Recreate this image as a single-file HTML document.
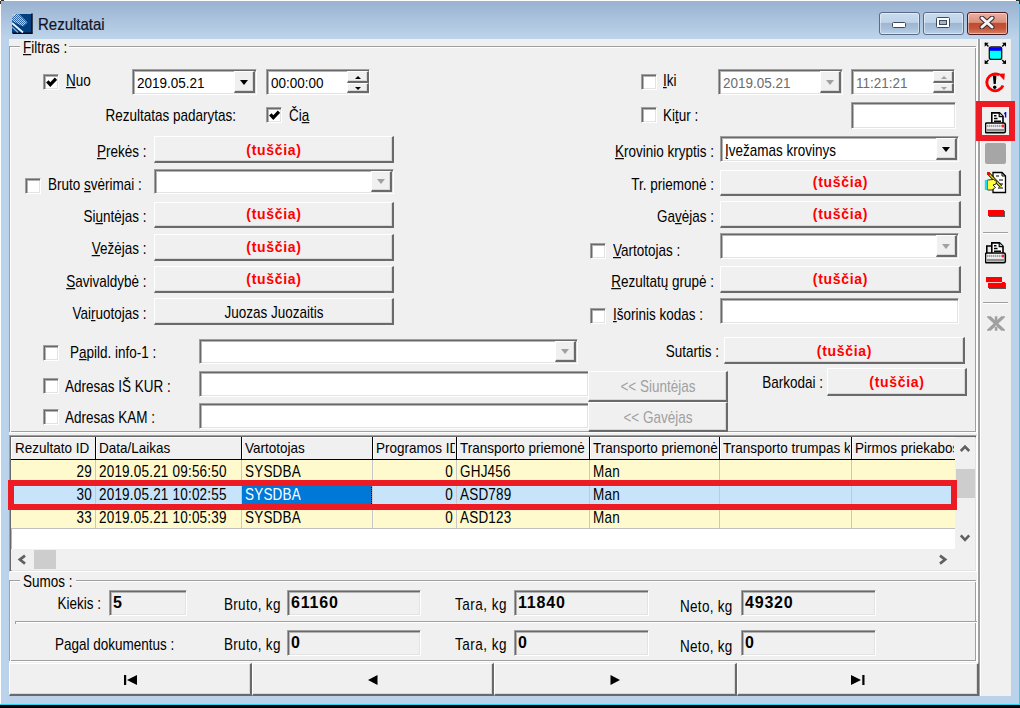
<!DOCTYPE html><html><head><meta charset="utf-8"><style>html,body{margin:0;padding:0;background:#fff;width:1020px;height:708px;overflow:hidden;}div,svg{position:absolute;box-sizing:border-box;}body{font-family:"Liberation Sans", sans-serif;}div{font-family:"Liberation Sans", sans-serif;}u{text-decoration:underline;text-underline-offset:1px;}</style></head><body>
<div style="left:1px;top:1px;width:1019px;height:704px;background:#bad2ea;"></div>
<div style="left:1px;top:1px;width:1018px;height:38px;background:linear-gradient(#99b2d0,#bdd4eb);"></div>
<div style="left:1019px;top:1px;width:1px;height:704px;background:#2ad4f2;"></div>
<div style="left:0px;top:704px;width:1020px;height:1px;background:#2ad4f2;"></div>
<div style="left:0px;top:705px;width:1020px;height:3px;background:#000;"></div>
<div style="left:9px;top:39px;width:1002px;height:657px;background:#f0f0f0;"></div>
<div style="left:1px;top:0px;width:3px;height:1px;background:#303030;"></div>
<div style="left:0px;top:1px;width:1px;height:3px;background:#303030;"></div>
<div style="left:1px;top:1px;width:2px;height:2px;background:#a8b8c8;"></div>
<div style="left:1016px;top:0px;width:4px;height:1px;background:#203030;"></div>
<div style="left:1019px;top:1px;width:1px;height:3px;background:#103038;"></div>
<div style="left:1017px;top:1px;width:2px;height:2px;background:#b0d0e0;"></div>
<svg style="left:12px;top:13px" width="22" height="22" viewBox="0 0 22 22"><defs><pattern id="chk" width="2" height="2" patternUnits="userSpaceOnUse"><rect width="2" height="2" fill="#3a6aa8"/><rect width="1" height="1" fill="#e8f0fa"/><rect x="1" y="1" width="1" height="1" fill="#c8d8ee"/></pattern></defs><rect x="0" y="1" width="20" height="19" fill="#003f80"/><rect x="19.2" y="0.5" width="1.5" height="20" fill="#050a18"/><rect x="0.5" y="19.5" width="20" height="1.5" fill="#050a18"/><path d="M0 1 L7 1 L15.5 9.5 L11 13.5 L0 8 Z" fill="url(#chk)" opacity="0.85"/><path d="M0 1 L4 1 L0 4 Z" fill="#b8cce4"/><path d="M0 10 L11 19.5" stroke="#f0f6ff" stroke-width="1.8"/><path d="M0 14 L6 19.5" stroke="#8fb0d8" stroke-width="1.2"/></svg>
<div style="left:38px;top:15px;font-size:15px;line-height:20px;height:20px;white-space:pre;color:#141428;transform:scaleY(1.12);transform-origin:0 15.20px;-webkit-text-stroke:0.2px #141428;">Rezultatai</div>
<div style="left:879px;top:12px;width:41px;height:23px;background:linear-gradient(#cadcee 0%,#bed3e9 45%,#9db5d1 47%,#a7bfd9 75%,#bdd2ea 100%);border:1px solid #5b6b85;border-radius:3px;box-shadow:inset 0 0 0 1px rgba(255,255,255,0.45);"></div>
<div style="left:923px;top:12px;width:41px;height:23px;background:linear-gradient(#cadcee 0%,#bed3e9 45%,#9db5d1 47%,#a7bfd9 75%,#bdd2ea 100%);border:1px solid #5b6b85;border-radius:3px;box-shadow:inset 0 0 0 1px rgba(255,255,255,0.45);"></div>
<div style="left:967px;top:12px;width:41px;height:23px;background:linear-gradient(#eab0a3 0%,#dd8f7c 45%,#c04a2e 47%,#c6553a 75%,#d4836c 100%);border:1px solid #4b1a1e;border-radius:3px;box-shadow:inset 0 0 0 1px rgba(255,255,255,0.45);"></div>
<div style="left:892px;top:22px;width:14px;height:6px;background:#fff;border:1px solid #3d4a5e;border-radius:1.5px;"></div>
<div style="left:936px;top:17px;width:14px;height:11px;background:#fff;border:1px solid #3d4a5e;border-radius:1.5px;"></div>
<div style="left:939px;top:20px;width:8px;height:5px;background:#9db5d1;border:1px solid #3d4a5e;"></div>
<svg style="left:979px;top:16px" width="16" height="13" viewBox="0 0 16 13"><path d="M3 2 L13 11 M13 2 L3 11" stroke="#3a2a30" stroke-width="5" stroke-linecap="round"/><path d="M3 2 L13 11 M13 2 L3 11" stroke="#f4f4f4" stroke-width="3" stroke-linecap="round"/></svg>
<div style="left:9px;top:46px;width:967px;height:386px;border:1px solid #a0a0a0;box-sizing:border-box;"></div>
<div style="left:10px;top:47px;width:967px;height:386px;border:1px solid #fff;box-sizing:border-box;border-right:none;border-bottom:none;"></div>
<div style="left:10px;top:47px;width:967px;height:386px;box-sizing:border-box;border-right:1px solid #fff;border-bottom:1px solid #fff;"></div>
<div style="left:20px;top:42px;width:49px;height:10px;background:#f0f0f0;"></div>
<div style="left:23px;top:39px;font-size:13.5px;line-height:20px;height:20px;white-space:pre;color:#000;transform:scaleY(1.17);transform-origin:0 14.68px;"><u>F</u>iltras :</div>
<div style="left:43px;top:74px;width:16px;height:16px;background:#fff;border-top:1px solid #a0a0a0;border-left:1px solid #a0a0a0;border-right:1px solid #fff;border-bottom:1px solid #fff;box-sizing:border-box;box-shadow:inset 1px 1px 0 #696969, inset 2px 2px 0 #b4b4b4, inset -1px -1px 0 #e3e3e3;"></div>
<svg style="position:absolute;left:46px;top:77px" width="11" height="11" viewBox="0 0 11 11"><path d="M1.3 4.4 L4.3 7.6 L10 1.7" fill="none" stroke="#000" stroke-width="3.3" stroke-linecap="butt"/></svg>
<div style="left:66px;top:72px;font-size:13.5px;line-height:20px;height:20px;white-space:pre;color:#000;transform:scaleY(1.17);transform-origin:0 14.68px;"><u>N</u>uo</div>
<div style="left:132px;top:69px;width:125px;height:26px;background:#fff;border-top:1px solid #a0a0a0;border-left:1px solid #a0a0a0;border-right:1px solid #fff;border-bottom:1px solid #fff;box-sizing:border-box;box-shadow:inset 1px 1px 0 #696969, inset 2px 2px 0 #b4b4b4, inset -1px -1px 0 #e3e3e3;"></div>
<div style="left:234px;top:71px;width:21px;height:22px;background:#f0f0f0;border-top:1px solid #fff;border-left:1px solid #fff;border-right:2px solid #6a6a6a;border-bottom:2px solid #6a6a6a;box-sizing:border-box;box-shadow:inset -1px -1px 0 #d8d8d8;"></div>
<div style="left:239.5px;top:79.5px;width:0;height:0;border-left:4.5px solid transparent;border-right:4.5px solid transparent;border-top:5px solid #000;"></div>
<div style="left:137px;top:74px;font-size:13.5px;line-height:20px;height:20px;white-space:pre;color:#000;transform:scaleY(1.12);transform-origin:0 14.68px;">2019.05.21</div>
<div style="left:266px;top:69px;width:104px;height:26px;background:#fff;border-top:1px solid #a0a0a0;border-left:1px solid #a0a0a0;border-right:1px solid #fff;border-bottom:1px solid #fff;box-sizing:border-box;box-shadow:inset 1px 1px 0 #696969, inset 2px 2px 0 #b4b4b4, inset -1px -1px 0 #e3e3e3;"></div>
<div style="left:271px;top:74px;font-size:13.5px;line-height:20px;height:20px;white-space:pre;color:#000;transform:scaleY(1.12);transform-origin:0 14.68px;">00:00:00</div>
<div style="left:347px;top:71px;width:22px;height:12px;background:#f0f0f0;border-top:1px solid #fff;border-left:1px solid #fff;border-right:2px solid #6a6a6a;border-bottom:2px solid #6a6a6a;box-sizing:border-box;box-shadow:inset -1px -1px 0 #d8d8d8;"></div>
<div style="left:347px;top:83px;width:22px;height:10px;background:#f0f0f0;border-top:1px solid #fff;border-left:1px solid #fff;border-right:2px solid #6a6a6a;border-bottom:2px solid #6a6a6a;box-sizing:border-box;box-shadow:inset -1px -1px 0 #d8d8d8;"></div>
<div style="left:354.5px;top:76px;width:0;height:0;border-left:3.0px solid transparent;border-right:3.0px solid transparent;border-bottom:3px solid #000;"></div>
<div style="left:354.5px;top:87px;width:0;height:0;border-left:3.0px solid transparent;border-right:3.0px solid transparent;border-top:3px solid #000;"></div>
<div style="left:641px;top:74px;width:16px;height:16px;background:#fff;border-top:1px solid #a0a0a0;border-left:1px solid #a0a0a0;border-right:1px solid #fff;border-bottom:1px solid #fff;box-sizing:border-box;box-shadow:inset 1px 1px 0 #696969, inset 2px 2px 0 #b4b4b4, inset -1px -1px 0 #e3e3e3;"></div>
<div style="left:663px;top:72px;font-size:13.5px;line-height:20px;height:20px;white-space:pre;color:#000;transform:scaleY(1.17);transform-origin:0 14.68px;"><u>I</u>ki</div>
<div style="left:718px;top:69px;width:125px;height:26px;background:#fff;border-top:1px solid #a0a0a0;border-left:1px solid #a0a0a0;border-right:1px solid #fff;border-bottom:1px solid #fff;box-sizing:border-box;box-shadow:inset 1px 1px 0 #696969, inset 2px 2px 0 #b4b4b4, inset -1px -1px 0 #e3e3e3;"></div>
<div style="left:820px;top:71px;width:21px;height:22px;background:#f0f0f0;border-top:1px solid #fff;border-left:1px solid #fff;border-right:2px solid #6a6a6a;border-bottom:2px solid #6a6a6a;box-sizing:border-box;box-shadow:inset -1px -1px 0 #d8d8d8;"></div>
<div style="left:825.5px;top:79.5px;width:0;height:0;border-left:4.5px solid transparent;border-right:4.5px solid transparent;border-top:5px solid #a0a0a0;"></div>
<div style="left:723px;top:74px;font-size:13.5px;line-height:20px;height:20px;white-space:pre;color:#6d6d6d;transform:scaleY(1.12);transform-origin:0 14.68px;">2019.05.21</div>
<div style="left:851px;top:69px;width:104px;height:26px;background:#fff;border-top:1px solid #a0a0a0;border-left:1px solid #a0a0a0;border-right:1px solid #fff;border-bottom:1px solid #fff;box-sizing:border-box;box-shadow:inset 1px 1px 0 #696969, inset 2px 2px 0 #b4b4b4, inset -1px -1px 0 #e3e3e3;"></div>
<div style="left:856px;top:74px;font-size:13.5px;line-height:20px;height:20px;white-space:pre;color:#6d6d6d;transform:scaleY(1.12);transform-origin:0 14.68px;">11:21:21</div>
<div style="left:933px;top:71px;width:21px;height:12px;background:#f0f0f0;border-top:1px solid #fff;border-left:1px solid #fff;border-right:2px solid #6a6a6a;border-bottom:2px solid #6a6a6a;box-sizing:border-box;box-shadow:inset -1px -1px 0 #d8d8d8;"></div>
<div style="left:933px;top:83px;width:21px;height:10px;background:#f0f0f0;border-top:1px solid #fff;border-left:1px solid #fff;border-right:2px solid #6a6a6a;border-bottom:2px solid #6a6a6a;box-sizing:border-box;box-shadow:inset -1px -1px 0 #d8d8d8;"></div>
<div style="left:940.5px;top:76px;width:0;height:0;border-left:3.0px solid transparent;border-right:3.0px solid transparent;border-bottom:3px solid #a0a0a0;"></div>
<div style="left:940.5px;top:87px;width:0;height:0;border-left:3.0px solid transparent;border-right:3.0px solid transparent;border-top:3px solid #a0a0a0;"></div>
<div style="left:-164px;top:107px;width:400px;text-align:right;font-size:13.5px;line-height:20px;height:20px;white-space:pre;color:#000;transform:scaleY(1.17);transform-origin:0 14.68px;">Rezultatas padarytas:</div>
<div style="left:266px;top:107px;width:16px;height:16px;background:#fff;border-top:1px solid #a0a0a0;border-left:1px solid #a0a0a0;border-right:1px solid #fff;border-bottom:1px solid #fff;box-sizing:border-box;box-shadow:inset 1px 1px 0 #696969, inset 2px 2px 0 #b4b4b4, inset -1px -1px 0 #e3e3e3;"></div>
<svg style="position:absolute;left:269px;top:110px" width="11" height="11" viewBox="0 0 11 11"><path d="M1.3 4.4 L4.3 7.6 L10 1.7" fill="none" stroke="#000" stroke-width="3.3" stroke-linecap="butt"/></svg>
<div style="left:289px;top:107px;font-size:13.5px;line-height:20px;height:20px;white-space:pre;color:#000;transform:scaleY(1.17);transform-origin:0 14.68px;">Či<u>a</u></div>
<div style="left:641px;top:107px;width:16px;height:16px;background:#fff;border-top:1px solid #a0a0a0;border-left:1px solid #a0a0a0;border-right:1px solid #fff;border-bottom:1px solid #fff;box-sizing:border-box;box-shadow:inset 1px 1px 0 #696969, inset 2px 2px 0 #b4b4b4, inset -1px -1px 0 #e3e3e3;"></div>
<div style="left:663px;top:107px;font-size:13.5px;line-height:20px;height:20px;white-space:pre;color:#000;transform:scaleY(1.17);transform-origin:0 14.68px;">Ki<u>t</u>ur :</div>
<div style="left:851px;top:102px;width:105px;height:27px;background:#fff;border-top:1px solid #a0a0a0;border-left:1px solid #a0a0a0;border-right:1px solid #fff;border-bottom:1px solid #fff;box-sizing:border-box;box-shadow:inset 1px 1px 0 #696969, inset 2px 2px 0 #b4b4b4, inset -1px -1px 0 #e3e3e3;"></div>
<div style="left:-253.5px;top:143px;width:400px;text-align:right;font-size:13.5px;line-height:20px;height:20px;white-space:pre;color:#000;transform:scaleY(1.17);transform-origin:0 14.68px;"><u>P</u>rekės :</div>
<div style="left:154px;top:136px;width:240px;height:27px;background:#f0f0f0;border-top:1px solid #fff;border-left:1px solid #fff;border-right:2px solid #6a6a6a;border-bottom:2px solid #6a6a6a;box-sizing:border-box;box-shadow:inset -1px -1px 0 #d8d8d8;"></div>
<div style="left:74.0px;top:140px;width:400px;text-align:center;font-size:14px;line-height:20px;height:20px;white-space:pre;color:#ff0000;font-weight:bold;letter-spacing:0.7px;">(tuščia)</div>
<div style="left:25px;top:178px;width:16px;height:16px;background:#fff;border-top:1px solid #a0a0a0;border-left:1px solid #a0a0a0;border-right:1px solid #fff;border-bottom:1px solid #fff;box-sizing:border-box;box-shadow:inset 1px 1px 0 #696969, inset 2px 2px 0 #b4b4b4, inset -1px -1px 0 #e3e3e3;"></div>
<div style="left:48px;top:176px;font-size:13.5px;line-height:20px;height:20px;white-space:pre;color:#000;transform:scaleY(1.17);transform-origin:0 14.68px;">Bruto <u>s</u>vėrimai :</div>
<div style="left:154px;top:169px;width:240px;height:25px;background:#fff;border-top:1px solid #a0a0a0;border-left:1px solid #a0a0a0;border-right:1px solid #fff;border-bottom:1px solid #fff;box-sizing:border-box;box-shadow:inset 1px 1px 0 #696969, inset 2px 2px 0 #b4b4b4, inset -1px -1px 0 #e3e3e3;"></div>
<div style="left:371px;top:171px;width:21px;height:21px;background:#f0f0f0;border-top:1px solid #fff;border-left:1px solid #fff;border-right:2px solid #6a6a6a;border-bottom:2px solid #6a6a6a;box-sizing:border-box;box-shadow:inset -1px -1px 0 #d8d8d8;"></div>
<div style="left:376.5px;top:179.0px;width:0;height:0;border-left:4.5px solid transparent;border-right:4.5px solid transparent;border-top:5px solid #a0a0a0;"></div>
<div style="left:-253.5px;top:208px;width:400px;text-align:right;font-size:13.5px;line-height:20px;height:20px;white-space:pre;color:#000;transform:scaleY(1.17);transform-origin:0 14.68px;">Si<u>u</u>ntėjas :</div>
<div style="left:154px;top:202px;width:240px;height:26px;background:#f0f0f0;border-top:1px solid #fff;border-left:1px solid #fff;border-right:2px solid #6a6a6a;border-bottom:2px solid #6a6a6a;box-sizing:border-box;box-shadow:inset -1px -1px 0 #d8d8d8;"></div>
<div style="left:74.0px;top:204px;width:400px;text-align:center;font-size:14px;line-height:20px;height:20px;white-space:pre;color:#ff0000;font-weight:bold;letter-spacing:0.7px;">(tuščia)</div>
<div style="left:-253.5px;top:240px;width:400px;text-align:right;font-size:13.5px;line-height:20px;height:20px;white-space:pre;color:#000;transform:scaleY(1.17);transform-origin:0 14.68px;"><u>V</u>ežėjas :</div>
<div style="left:154px;top:234px;width:240px;height:27px;background:#f0f0f0;border-top:1px solid #fff;border-left:1px solid #fff;border-right:2px solid #6a6a6a;border-bottom:2px solid #6a6a6a;box-sizing:border-box;box-shadow:inset -1px -1px 0 #d8d8d8;"></div>
<div style="left:74.0px;top:237px;width:400px;text-align:center;font-size:14px;line-height:20px;height:20px;white-space:pre;color:#ff0000;font-weight:bold;letter-spacing:0.7px;">(tuščia)</div>
<div style="left:-253.5px;top:273px;width:400px;text-align:right;font-size:13.5px;line-height:20px;height:20px;white-space:pre;color:#000;transform:scaleY(1.17);transform-origin:0 14.68px;"><u>S</u>avivaldybė :</div>
<div style="left:154px;top:266px;width:240px;height:27px;background:#f0f0f0;border-top:1px solid #fff;border-left:1px solid #fff;border-right:2px solid #6a6a6a;border-bottom:2px solid #6a6a6a;box-sizing:border-box;box-shadow:inset -1px -1px 0 #d8d8d8;"></div>
<div style="left:74.0px;top:269px;width:400px;text-align:center;font-size:14px;line-height:20px;height:20px;white-space:pre;color:#ff0000;font-weight:bold;letter-spacing:0.7px;">(tuščia)</div>
<div style="left:-253.5px;top:305px;width:400px;text-align:right;font-size:13.5px;line-height:20px;height:20px;white-space:pre;color:#000;transform:scaleY(1.17);transform-origin:0 14.68px;">Vai<u>r</u>uotojas :</div>
<div style="left:154px;top:298px;width:240px;height:27px;background:#f0f0f0;border-top:1px solid #fff;border-left:1px solid #fff;border-right:2px solid #6a6a6a;border-bottom:2px solid #6a6a6a;box-sizing:border-box;box-shadow:inset -1px -1px 0 #d8d8d8;"></div>
<div style="left:74.0px;top:304px;width:400px;text-align:center;font-size:13.5px;line-height:20px;height:20px;white-space:pre;color:#000;transform:scaleY(1.17);transform-origin:0 14.68px;">Juozas Juozaitis</div>
<div style="left:314px;top:143px;width:400px;text-align:right;font-size:13.5px;line-height:20px;height:20px;white-space:pre;color:#000;transform:scaleY(1.17);transform-origin:0 14.68px;"><u>K</u>rovinio kryptis :</div>
<div style="left:720px;top:136px;width:239px;height:26px;background:#fff;border-top:1px solid #a0a0a0;border-left:1px solid #a0a0a0;border-right:1px solid #fff;border-bottom:1px solid #fff;box-sizing:border-box;box-shadow:inset 1px 1px 0 #696969, inset 2px 2px 0 #b4b4b4, inset -1px -1px 0 #e3e3e3;"></div>
<div style="left:936px;top:138px;width:21px;height:22px;background:#f0f0f0;border-top:1px solid #fff;border-left:1px solid #fff;border-right:2px solid #6a6a6a;border-bottom:2px solid #6a6a6a;box-sizing:border-box;box-shadow:inset -1px -1px 0 #d8d8d8;"></div>
<div style="left:941.5px;top:146.5px;width:0;height:0;border-left:4.5px solid transparent;border-right:4.5px solid transparent;border-top:5px solid #000;"></div>
<div style="left:725px;top:142px;font-size:13.5px;line-height:20px;height:20px;white-space:pre;color:#000;transform:scaleY(1.17);transform-origin:0 14.68px;">Įvežamas krovinys</div>
<div style="left:314px;top:176px;width:400px;text-align:right;font-size:13.5px;line-height:20px;height:20px;white-space:pre;color:#000;transform:scaleY(1.17);transform-origin:0 14.68px;">Tr. priemonė :</div>
<div style="left:720px;top:170px;width:241px;height:26px;background:#f0f0f0;border-top:1px solid #fff;border-left:1px solid #fff;border-right:2px solid #6a6a6a;border-bottom:2px solid #6a6a6a;box-sizing:border-box;box-shadow:inset -1px -1px 0 #d8d8d8;"></div>
<div style="left:640.5px;top:172px;width:400px;text-align:center;font-size:14px;line-height:20px;height:20px;white-space:pre;color:#ff0000;font-weight:bold;letter-spacing:0.7px;">(tuščia)</div>
<div style="left:314px;top:208px;width:400px;text-align:right;font-size:13.5px;line-height:20px;height:20px;white-space:pre;color:#000;transform:scaleY(1.17);transform-origin:0 14.68px;">Ga<u>v</u>ėjas :</div>
<div style="left:720px;top:201px;width:241px;height:27px;background:#f0f0f0;border-top:1px solid #fff;border-left:1px solid #fff;border-right:2px solid #6a6a6a;border-bottom:2px solid #6a6a6a;box-sizing:border-box;box-shadow:inset -1px -1px 0 #d8d8d8;"></div>
<div style="left:640.5px;top:204px;width:400px;text-align:center;font-size:14px;line-height:20px;height:20px;white-space:pre;color:#ff0000;font-weight:bold;letter-spacing:0.7px;">(tuščia)</div>
<div style="left:590px;top:243px;width:16px;height:16px;background:#fff;border-top:1px solid #a0a0a0;border-left:1px solid #a0a0a0;border-right:1px solid #fff;border-bottom:1px solid #fff;box-sizing:border-box;box-shadow:inset 1px 1px 0 #696969, inset 2px 2px 0 #b4b4b4, inset -1px -1px 0 #e3e3e3;"></div>
<div style="left:613px;top:242px;font-size:13.5px;line-height:20px;height:20px;white-space:pre;color:#000;transform:scaleY(1.17);transform-origin:0 14.68px;"><u>V</u>artotojas :</div>
<div style="left:720px;top:233px;width:239px;height:26px;background:#fff;border-top:1px solid #a0a0a0;border-left:1px solid #a0a0a0;border-right:1px solid #fff;border-bottom:1px solid #fff;box-sizing:border-box;box-shadow:inset 1px 1px 0 #696969, inset 2px 2px 0 #b4b4b4, inset -1px -1px 0 #e3e3e3;"></div>
<div style="left:936px;top:235px;width:21px;height:22px;background:#f0f0f0;border-top:1px solid #fff;border-left:1px solid #fff;border-right:2px solid #6a6a6a;border-bottom:2px solid #6a6a6a;box-sizing:border-box;box-shadow:inset -1px -1px 0 #d8d8d8;"></div>
<div style="left:941.5px;top:243.5px;width:0;height:0;border-left:4.5px solid transparent;border-right:4.5px solid transparent;border-top:5px solid #a0a0a0;"></div>
<div style="left:314px;top:273px;width:400px;text-align:right;font-size:13.5px;line-height:20px;height:20px;white-space:pre;color:#000;transform:scaleY(1.17);transform-origin:0 14.68px;"><u>R</u>ezultatų grupė :</div>
<div style="left:720px;top:266px;width:241px;height:27px;background:#f0f0f0;border-top:1px solid #fff;border-left:1px solid #fff;border-right:2px solid #6a6a6a;border-bottom:2px solid #6a6a6a;box-sizing:border-box;box-shadow:inset -1px -1px 0 #d8d8d8;"></div>
<div style="left:640.5px;top:269px;width:400px;text-align:center;font-size:14px;line-height:20px;height:20px;white-space:pre;color:#ff0000;font-weight:bold;letter-spacing:0.7px;">(tuščia)</div>
<div style="left:590px;top:308px;width:16px;height:16px;background:#fff;border-top:1px solid #a0a0a0;border-left:1px solid #a0a0a0;border-right:1px solid #fff;border-bottom:1px solid #fff;box-sizing:border-box;box-shadow:inset 1px 1px 0 #696969, inset 2px 2px 0 #b4b4b4, inset -1px -1px 0 #e3e3e3;"></div>
<div style="left:613px;top:306px;font-size:13.5px;line-height:20px;height:20px;white-space:pre;color:#000;transform:scaleY(1.17);transform-origin:0 14.68px;"><u>I</u>šorinis kodas :</div>
<div style="left:720px;top:298px;width:239px;height:26px;background:#fff;border-top:1px solid #a0a0a0;border-left:1px solid #a0a0a0;border-right:1px solid #fff;border-bottom:1px solid #fff;box-sizing:border-box;box-shadow:inset 1px 1px 0 #696969, inset 2px 2px 0 #b4b4b4, inset -1px -1px 0 #e3e3e3;"></div>
<div style="left:43px;top:345px;width:16px;height:16px;background:#fff;border-top:1px solid #a0a0a0;border-left:1px solid #a0a0a0;border-right:1px solid #fff;border-bottom:1px solid #fff;box-sizing:border-box;box-shadow:inset 1px 1px 0 #696969, inset 2px 2px 0 #b4b4b4, inset -1px -1px 0 #e3e3e3;"></div>
<div style="left:70px;top:344px;font-size:13.5px;line-height:20px;height:20px;white-space:pre;color:#000;transform:scaleY(1.17);transform-origin:0 14.68px;">P<u>a</u>pild. info-1 :</div>
<div style="left:199px;top:339px;width:379px;height:25px;background:#fff;border-top:1px solid #a0a0a0;border-left:1px solid #a0a0a0;border-right:1px solid #fff;border-bottom:1px solid #fff;box-sizing:border-box;box-shadow:inset 1px 1px 0 #696969, inset 2px 2px 0 #b4b4b4, inset -1px -1px 0 #e3e3e3;"></div>
<div style="left:555px;top:341px;width:21px;height:21px;background:#f0f0f0;border-top:1px solid #fff;border-left:1px solid #fff;border-right:2px solid #6a6a6a;border-bottom:2px solid #6a6a6a;box-sizing:border-box;box-shadow:inset -1px -1px 0 #d8d8d8;"></div>
<div style="left:560.5px;top:349.0px;width:0;height:0;border-left:4.5px solid transparent;border-right:4.5px solid transparent;border-top:5px solid #a0a0a0;"></div>
<div style="left:43px;top:378px;width:16px;height:16px;background:#fff;border-top:1px solid #a0a0a0;border-left:1px solid #a0a0a0;border-right:1px solid #fff;border-bottom:1px solid #fff;box-sizing:border-box;box-shadow:inset 1px 1px 0 #696969, inset 2px 2px 0 #b4b4b4, inset -1px -1px 0 #e3e3e3;"></div>
<div style="left:65px;top:378px;font-size:13.5px;line-height:20px;height:20px;white-space:pre;color:#000;transform:scaleY(1.17);transform-origin:0 14.68px;">Adresas IŠ KUR :</div>
<div style="left:199px;top:371px;width:390px;height:26px;background:#fff;border-top:1px solid #a0a0a0;border-left:1px solid #a0a0a0;border-right:1px solid #fff;border-bottom:1px solid #fff;box-sizing:border-box;box-shadow:inset 1px 1px 0 #696969, inset 2px 2px 0 #b4b4b4, inset -1px -1px 0 #e3e3e3;"></div>
<div style="left:43px;top:409px;width:16px;height:16px;background:#fff;border-top:1px solid #a0a0a0;border-left:1px solid #a0a0a0;border-right:1px solid #fff;border-bottom:1px solid #fff;box-sizing:border-box;box-shadow:inset 1px 1px 0 #696969, inset 2px 2px 0 #b4b4b4, inset -1px -1px 0 #e3e3e3;"></div>
<div style="left:65px;top:409px;font-size:13.5px;line-height:20px;height:20px;white-space:pre;color:#000;transform:scaleY(1.17);transform-origin:0 14.68px;">Adresas KAM :</div>
<div style="left:199px;top:403px;width:390px;height:26px;background:#fff;border-top:1px solid #a0a0a0;border-left:1px solid #a0a0a0;border-right:1px solid #fff;border-bottom:1px solid #fff;box-sizing:border-box;box-shadow:inset 1px 1px 0 #696969, inset 2px 2px 0 #b4b4b4, inset -1px -1px 0 #e3e3e3;"></div>
<div style="left:588px;top:371px;width:140px;height:31px;background:#f0f0f0;border-top:1px solid #fff;border-left:1px solid #fff;border-right:2px solid #6a6a6a;border-bottom:2px solid #6a6a6a;box-sizing:border-box;box-shadow:inset -1px -1px 0 #d8d8d8;"></div>
<div style="left:458.0px;top:378px;width:400px;text-align:center;font-size:13.5px;line-height:20px;height:20px;white-space:pre;color:#a0a0a0;transform:scaleY(1.17);transform-origin:0 14.68px;">&lt;&lt; Siuntėjas</div>
<div style="left:588px;top:402px;width:140px;height:30px;background:#f0f0f0;border-top:1px solid #fff;border-left:1px solid #fff;border-right:2px solid #6a6a6a;border-bottom:2px solid #6a6a6a;box-sizing:border-box;box-shadow:inset -1px -1px 0 #d8d8d8;"></div>
<div style="left:458.0px;top:409px;width:400px;text-align:center;font-size:13.5px;line-height:20px;height:20px;white-space:pre;color:#a0a0a0;transform:scaleY(1.17);transform-origin:0 14.68px;">&lt;&lt; Gavėjas</div>
<div style="left:319px;top:343px;width:400px;text-align:right;font-size:13.5px;line-height:20px;height:20px;white-space:pre;color:#000;transform:scaleY(1.17);transform-origin:0 14.68px;">Sutartis :</div>
<div style="left:724px;top:337px;width:241px;height:27px;background:#f0f0f0;border-top:1px solid #fff;border-left:1px solid #fff;border-right:2px solid #6a6a6a;border-bottom:2px solid #6a6a6a;box-sizing:border-box;box-shadow:inset -1px -1px 0 #d8d8d8;"></div>
<div style="left:644.5px;top:341px;width:400px;text-align:center;font-size:14px;line-height:20px;height:20px;white-space:pre;color:#ff0000;font-weight:bold;letter-spacing:0.7px;">(tuščia)</div>
<div style="left:423px;top:374px;width:400px;text-align:right;font-size:13.5px;line-height:20px;height:20px;white-space:pre;color:#000;transform:scaleY(1.17);transform-origin:0 14.68px;">Barkodai :</div>
<div style="left:827px;top:368px;width:140px;height:28px;background:#f0f0f0;border-top:1px solid #fff;border-left:1px solid #fff;border-right:2px solid #6a6a6a;border-bottom:2px solid #6a6a6a;box-sizing:border-box;box-shadow:inset -1px -1px 0 #d8d8d8;"></div>
<div style="left:697.0px;top:372px;width:400px;text-align:center;font-size:14px;line-height:20px;height:20px;white-space:pre;color:#ff0000;font-weight:bold;letter-spacing:0.7px;">(tuščia)</div>
<div style="left:977px;top:39px;width:1px;height:657px;background:#fff;"></div>
<div style="left:978px;top:39px;width:2px;height:657px;background:#a0a0a0;"></div>
<div style="left:980px;top:39px;width:1px;height:657px;background:#fff;"></div>
<div style="left:9px;top:435px;width:968px;height:137px;background:#fff;border-top:1px solid #a0a0a0;border-left:1px solid #a0a0a0;border-right:1px solid #fff;border-bottom:1px solid #fff;box-sizing:border-box;box-shadow:inset 1px 1px 0 #696969, inset 2px 2px 0 #b4b4b4, inset -1px -1px 0 #e3e3e3;"></div>
<div style="left:11px;top:437px;width:944px;height:23px;background:#f0f0f0;border-top:1px solid #fff;border-left:1px solid #fff;"></div>
<div style="left:11px;top:459px;width:944px;height:1px;background:#000;"></div>
<div style="left:14px;top:437px;width:80px;height:21px;overflow:hidden;"><div style="left:1px;top:2px;font-size:13.5px;line-height:20px;white-space:pre;color:#000;transform:scaleY(1.12);transform-origin:0 14.68px">Rezultato ID</div></div>
<div style="left:98px;top:437px;width:142px;height:21px;overflow:hidden;"><div style="left:1px;top:2px;font-size:13.5px;line-height:20px;white-space:pre;color:#000;transform:scaleY(1.12);transform-origin:0 14.68px">Data/Laikas</div></div>
<div style="left:95px;top:437px;width:1px;height:22px;background:#000;"></div>
<div style="left:96px;top:437px;width:1px;height:22px;background:#fff;"></div>
<div style="left:244px;top:437px;width:127px;height:21px;overflow:hidden;"><div style="left:1px;top:2px;font-size:13.5px;line-height:20px;white-space:pre;color:#000;transform:scaleY(1.12);transform-origin:0 14.68px">Vartotojas</div></div>
<div style="left:241px;top:437px;width:1px;height:22px;background:#000;"></div>
<div style="left:242px;top:437px;width:1px;height:22px;background:#fff;"></div>
<div style="left:375px;top:437px;width:80px;height:21px;overflow:hidden;"><div style="left:1px;top:2px;font-size:13.5px;line-height:20px;white-space:pre;color:#000;transform:scaleY(1.12);transform-origin:0 14.68px">Programos ID</div></div>
<div style="left:372px;top:437px;width:1px;height:22px;background:#000;"></div>
<div style="left:373px;top:437px;width:1px;height:22px;background:#fff;"></div>
<div style="left:459px;top:437px;width:129px;height:21px;overflow:hidden;"><div style="left:1px;top:2px;font-size:13.5px;line-height:20px;white-space:pre;color:#000;transform:scaleY(1.12);transform-origin:0 14.68px">Transporto priemonė</div></div>
<div style="left:456px;top:437px;width:1px;height:22px;background:#000;"></div>
<div style="left:457px;top:437px;width:1px;height:22px;background:#fff;"></div>
<div style="left:592px;top:437px;width:126px;height:21px;overflow:hidden;"><div style="left:1px;top:2px;font-size:13.5px;line-height:20px;white-space:pre;color:#000;transform:scaleY(1.12);transform-origin:0 14.68px">Transporto priemonė</div></div>
<div style="left:589px;top:437px;width:1px;height:22px;background:#000;"></div>
<div style="left:590px;top:437px;width:1px;height:22px;background:#fff;"></div>
<div style="left:722px;top:437px;width:128px;height:21px;overflow:hidden;"><div style="left:1px;top:2px;font-size:13.5px;line-height:20px;white-space:pre;color:#000;transform:scaleY(1.12);transform-origin:0 14.68px">Transporto trumpas k</div></div>
<div style="left:719px;top:437px;width:1px;height:22px;background:#000;"></div>
<div style="left:720px;top:437px;width:1px;height:22px;background:#fff;"></div>
<div style="left:854px;top:437px;width:100px;height:21px;overflow:hidden;"><div style="left:1px;top:2px;font-size:13.5px;line-height:20px;white-space:pre;color:#000;transform:scaleY(1.12);transform-origin:0 14.68px">Pirmos priekabos</div></div>
<div style="left:851px;top:437px;width:1px;height:22px;background:#000;"></div>
<div style="left:852px;top:437px;width:1px;height:22px;background:#fff;"></div>
<div style="left:11px;top:460px;width:944px;height:23px;background:#fffacd;"></div>
<div style="left:-308px;top:463px;width:400px;text-align:right;font-size:13.5px;line-height:20px;height:20px;white-space:pre;color:#000;transform:scaleY(1.2);transform-origin:0 14.68px;letter-spacing:0.2px;">29</div>
<div style="left:99px;top:463px;font-size:13.5px;line-height:20px;height:20px;white-space:pre;color:#000;transform:scaleY(1.2);transform-origin:0 14.68px;letter-spacing:0.2px;">2019.05.21 09:56:50</div>
<div style="left:245px;top:463px;font-size:13.5px;line-height:20px;height:20px;white-space:pre;color:#000;transform:scaleY(1.2);transform-origin:0 14.68px;letter-spacing:0.2px;">SYSDBA</div>
<div style="left:53px;top:463px;width:400px;text-align:right;font-size:13.5px;line-height:20px;height:20px;white-space:pre;color:#000;transform:scaleY(1.2);transform-origin:0 14.68px;letter-spacing:0.2px;">0</div>
<div style="left:460px;top:463px;font-size:13.5px;line-height:20px;height:20px;white-space:pre;color:#000;transform:scaleY(1.2);transform-origin:0 14.68px;letter-spacing:0.2px;">GHJ456</div>
<div style="left:593px;top:463px;font-size:13.5px;line-height:20px;height:20px;white-space:pre;color:#000;transform:scaleY(1.2);transform-origin:0 14.68px;letter-spacing:0.2px;">Man</div>
<div style="left:11px;top:483px;width:944px;height:0px;"></div>
<div style="left:11px;top:483px;width:944px;height:23px;background:#c8e4fa;"></div>
<div style="left:241px;top:483px;width:131px;height:23px;background:#0078d7;"></div>
<div style="left:371px;top:483px;width:1px;height:23px;border-right:1px dotted #000;"></div>
<div style="left:-308px;top:486px;width:400px;text-align:right;font-size:13.5px;line-height:20px;height:20px;white-space:pre;color:#000;transform:scaleY(1.2);transform-origin:0 14.68px;letter-spacing:0.2px;">30</div>
<div style="left:99px;top:486px;font-size:13.5px;line-height:20px;height:20px;white-space:pre;color:#000;transform:scaleY(1.2);transform-origin:0 14.68px;letter-spacing:0.2px;">2019.05.21 10:02:55</div>
<div style="left:245px;top:486px;font-size:13.5px;line-height:20px;height:20px;white-space:pre;color:#fff;transform:scaleY(1.2);transform-origin:0 14.68px;letter-spacing:0.2px;">SYSDBA</div>
<div style="left:53px;top:486px;width:400px;text-align:right;font-size:13.5px;line-height:20px;height:20px;white-space:pre;color:#000;transform:scaleY(1.2);transform-origin:0 14.68px;letter-spacing:0.2px;">0</div>
<div style="left:460px;top:486px;font-size:13.5px;line-height:20px;height:20px;white-space:pre;color:#000;transform:scaleY(1.2);transform-origin:0 14.68px;letter-spacing:0.2px;">ASD789</div>
<div style="left:593px;top:486px;font-size:13.5px;line-height:20px;height:20px;white-space:pre;color:#000;transform:scaleY(1.2);transform-origin:0 14.68px;letter-spacing:0.2px;">Man</div>
<div style="left:11px;top:506px;width:944px;height:0px;"></div>
<div style="left:11px;top:506px;width:944px;height:23px;background:#fffacd;"></div>
<div style="left:-308px;top:509px;width:400px;text-align:right;font-size:13.5px;line-height:20px;height:20px;white-space:pre;color:#000;transform:scaleY(1.2);transform-origin:0 14.68px;letter-spacing:0.2px;">33</div>
<div style="left:99px;top:509px;font-size:13.5px;line-height:20px;height:20px;white-space:pre;color:#000;transform:scaleY(1.2);transform-origin:0 14.68px;letter-spacing:0.2px;">2019.05.21 10:05:39</div>
<div style="left:245px;top:509px;font-size:13.5px;line-height:20px;height:20px;white-space:pre;color:#000;transform:scaleY(1.2);transform-origin:0 14.68px;letter-spacing:0.2px;">SYSDBA</div>
<div style="left:53px;top:509px;width:400px;text-align:right;font-size:13.5px;line-height:20px;height:20px;white-space:pre;color:#000;transform:scaleY(1.2);transform-origin:0 14.68px;letter-spacing:0.2px;">0</div>
<div style="left:460px;top:509px;font-size:13.5px;line-height:20px;height:20px;white-space:pre;color:#000;transform:scaleY(1.2);transform-origin:0 14.68px;letter-spacing:0.2px;">ASD123</div>
<div style="left:593px;top:509px;font-size:13.5px;line-height:20px;height:20px;white-space:pre;color:#000;transform:scaleY(1.2);transform-origin:0 14.68px;letter-spacing:0.2px;">Man</div>
<div style="left:11px;top:529px;width:944px;height:0px;"></div>
<div style="left:95px;top:460px;width:1px;height:69px;background:#c8c8c8;"></div>
<div style="left:241px;top:460px;width:1px;height:69px;background:#c8c8c8;"></div>
<div style="left:372px;top:460px;width:1px;height:69px;background:#c8c8c8;"></div>
<div style="left:456px;top:460px;width:1px;height:69px;background:#c8c8c8;"></div>
<div style="left:589px;top:460px;width:1px;height:69px;background:#c8c8c8;"></div>
<div style="left:719px;top:460px;width:1px;height:69px;background:#c8c8c8;"></div>
<div style="left:851px;top:460px;width:1px;height:69px;background:#c8c8c8;"></div>
<div style="left:955px;top:460px;width:1px;height:69px;background:#c8c8c8;"></div>
<div style="left:11px;top:528px;width:944px;height:1px;background:#c0c0c0;"></div>
<div style="left:955px;top:437px;width:20px;height:112px;background:#f0f0f0;"></div>
<div style="left:956px;top:469px;width:19px;height:29px;background:#cdcdcd;"></div>
<svg style="left:959px;top:443px" width="12" height="10" viewBox="0 0 12 10"><path d="M1.8 8 L6 3.6 L10.2 8" fill="none" stroke="#606060" stroke-width="2.6"/></svg>
<svg style="left:959px;top:533px" width="12" height="10" viewBox="0 0 12 10"><path d="M1.8 2.4 L6 6.8 L10.2 2.4" fill="none" stroke="#606060" stroke-width="2.6"/></svg>
<div style="left:11px;top:549px;width:964px;height:21px;background:#f0f0f0;"></div>
<div style="left:34px;top:550px;width:22px;height:19px;background:#cdcdcd;"></div>
<svg style="left:16px;top:553px" width="12" height="13" viewBox="0 0 12 13"><path d="M9 2.6 L3.8 6.6 L9 10.6" fill="none" stroke="#606060" stroke-width="2.6"/></svg>
<svg style="left:937px;top:553px" width="12" height="13" viewBox="0 0 12 13"><path d="M3 2.6 L8.2 6.6 L3 10.6" fill="none" stroke="#606060" stroke-width="2.6"/></svg>
<div style="left:8px;top:480px;width:949px;height:30px;border:6px solid #ed1c24;"></div>
<div style="left:9px;top:580px;width:967px;height:81px;border:1px solid #a0a0a0;box-sizing:border-box;"></div>
<div style="left:10px;top:581px;width:967px;height:81px;border:1px solid #fff;box-sizing:border-box;border-right:none;border-bottom:none;"></div>
<div style="left:10px;top:581px;width:967px;height:81px;box-sizing:border-box;border-right:1px solid #fff;border-bottom:1px solid #fff;"></div>
<div style="left:20px;top:576px;width:56px;height:10px;background:#f0f0f0;"></div>
<div style="left:23px;top:573px;font-size:13.5px;line-height:20px;height:20px;white-space:pre;color:#000;transform:scaleY(1.17);transform-origin:0 14.68px;">Sumos :</div>
<div style="left:-299px;top:595px;width:400px;text-align:right;font-size:13.5px;line-height:20px;height:20px;white-space:pre;color:#000;transform:scaleY(1.17);transform-origin:0 14.68px;">Kiekis :</div>
<div style="left:109px;top:590px;width:78px;height:26px;background:#f0f0f0;border-top:1px solid #a0a0a0;border-left:1px solid #a0a0a0;border-right:1px solid #fff;border-bottom:1px solid #fff;box-sizing:border-box;box-shadow:inset 1px 1px 0 #696969, inset 2px 2px 0 #b4b4b4, inset -1px -1px 0 #e3e3e3;"></div>
<div style="left:113px;top:593px;font-size:16px;line-height:20px;height:20px;white-space:pre;color:#000;font-weight:bold;letter-spacing:0.8px;">5</div>
<div style="left:224px;top:596px;font-size:13.5px;line-height:20px;height:20px;white-space:pre;color:#000;transform:scaleY(1.17);transform-origin:0 14.68px;letter-spacing:0.3px;">Bruto, kg</div>
<div style="left:287px;top:590px;width:134px;height:26px;background:#f0f0f0;border-top:1px solid #a0a0a0;border-left:1px solid #a0a0a0;border-right:1px solid #fff;border-bottom:1px solid #fff;box-sizing:border-box;box-shadow:inset 1px 1px 0 #696969, inset 2px 2px 0 #b4b4b4, inset -1px -1px 0 #e3e3e3;"></div>
<div style="left:291px;top:593px;font-size:16px;line-height:20px;height:20px;white-space:pre;color:#000;font-weight:bold;letter-spacing:0.8px;">61160</div>
<div style="left:455px;top:596px;font-size:13.5px;line-height:20px;height:20px;white-space:pre;color:#000;transform:scaleY(1.17);transform-origin:0 14.68px;letter-spacing:0.5px;">Tara, kg</div>
<div style="left:514px;top:590px;width:135px;height:26px;background:#f0f0f0;border-top:1px solid #a0a0a0;border-left:1px solid #a0a0a0;border-right:1px solid #fff;border-bottom:1px solid #fff;box-sizing:border-box;box-shadow:inset 1px 1px 0 #696969, inset 2px 2px 0 #b4b4b4, inset -1px -1px 0 #e3e3e3;"></div>
<div style="left:518px;top:593px;font-size:16px;line-height:20px;height:20px;white-space:pre;color:#000;font-weight:bold;letter-spacing:0.8px;">11840</div>
<div style="left:680px;top:598px;font-size:13.5px;line-height:20px;height:20px;white-space:pre;color:#000;transform:scaleY(1.17);transform-origin:0 14.68px;letter-spacing:0.3px;">Neto, kg</div>
<div style="left:741px;top:590px;width:135px;height:26px;background:#f0f0f0;border-top:1px solid #a0a0a0;border-left:1px solid #a0a0a0;border-right:1px solid #fff;border-bottom:1px solid #fff;box-sizing:border-box;box-shadow:inset 1px 1px 0 #696969, inset 2px 2px 0 #b4b4b4, inset -1px -1px 0 #e3e3e3;"></div>
<div style="left:745px;top:593px;font-size:16px;line-height:20px;height:20px;white-space:pre;color:#000;font-weight:bold;letter-spacing:0.8px;">49320</div>
<div style="left:15px;top:621px;width:962px;height:1px;background:#a0a0a0;"></div>
<div style="left:15px;top:622px;width:962px;height:1px;background:#fff;"></div>
<div style="left:15px;top:621px;width:1px;height:3px;background:#a0a0a0;"></div>
<div style="left:55px;top:636px;font-size:13.5px;line-height:20px;height:20px;white-space:pre;color:#000;transform:scaleY(1.17);transform-origin:0 14.68px;">Pagal dokumentus :</div>
<div style="left:224px;top:636px;font-size:13.5px;line-height:20px;height:20px;white-space:pre;color:#000;transform:scaleY(1.17);transform-origin:0 14.68px;letter-spacing:0.3px;">Bruto, kg</div>
<div style="left:287px;top:630px;width:134px;height:26px;background:#f0f0f0;border-top:1px solid #a0a0a0;border-left:1px solid #a0a0a0;border-right:1px solid #fff;border-bottom:1px solid #fff;box-sizing:border-box;box-shadow:inset 1px 1px 0 #696969, inset 2px 2px 0 #b4b4b4, inset -1px -1px 0 #e3e3e3;"></div>
<div style="left:291px;top:633px;font-size:16px;line-height:20px;height:20px;white-space:pre;color:#000;font-weight:bold;letter-spacing:0.8px;">0</div>
<div style="left:455px;top:636px;font-size:13.5px;line-height:20px;height:20px;white-space:pre;color:#000;transform:scaleY(1.17);transform-origin:0 14.68px;letter-spacing:0.5px;">Tara, kg</div>
<div style="left:514px;top:630px;width:135px;height:26px;background:#f0f0f0;border-top:1px solid #a0a0a0;border-left:1px solid #a0a0a0;border-right:1px solid #fff;border-bottom:1px solid #fff;box-sizing:border-box;box-shadow:inset 1px 1px 0 #696969, inset 2px 2px 0 #b4b4b4, inset -1px -1px 0 #e3e3e3;"></div>
<div style="left:518px;top:633px;font-size:16px;line-height:20px;height:20px;white-space:pre;color:#000;font-weight:bold;letter-spacing:0.8px;">0</div>
<div style="left:680px;top:638px;font-size:13.5px;line-height:20px;height:20px;white-space:pre;color:#000;transform:scaleY(1.17);transform-origin:0 14.68px;letter-spacing:0.3px;">Neto, kg</div>
<div style="left:741px;top:630px;width:135px;height:26px;background:#f0f0f0;border-top:1px solid #a0a0a0;border-left:1px solid #a0a0a0;border-right:1px solid #fff;border-bottom:1px solid #fff;box-sizing:border-box;box-shadow:inset 1px 1px 0 #696969, inset 2px 2px 0 #b4b4b4, inset -1px -1px 0 #e3e3e3;"></div>
<div style="left:745px;top:633px;font-size:16px;line-height:20px;height:20px;white-space:pre;color:#000;font-weight:bold;letter-spacing:0.8px;">0</div>
<div style="left:9px;top:663px;width:243px;height:33px;background:#f0f0f0;border-top:1px solid #fff;border-left:1px solid #fff;border-right:2px solid #6a6a6a;border-bottom:2px solid #6a6a6a;box-sizing:border-box;box-shadow:inset -1px -1px 0 #d8d8d8;"></div>
<div style="left:252px;top:663px;width:242px;height:33px;background:#f0f0f0;border-top:1px solid #fff;border-left:1px solid #fff;border-right:2px solid #6a6a6a;border-bottom:2px solid #6a6a6a;box-sizing:border-box;box-shadow:inset -1px -1px 0 #d8d8d8;"></div>
<div style="left:494px;top:663px;width:243px;height:33px;background:#f0f0f0;border-top:1px solid #fff;border-left:1px solid #fff;border-right:2px solid #6a6a6a;border-bottom:2px solid #6a6a6a;box-sizing:border-box;box-shadow:inset -1px -1px 0 #d8d8d8;"></div>
<div style="left:737px;top:663px;width:242px;height:33px;background:#f0f0f0;border-top:1px solid #fff;border-left:1px solid #fff;border-right:2px solid #6a6a6a;border-bottom:2px solid #6a6a6a;box-sizing:border-box;box-shadow:inset -1px -1px 0 #d8d8d8;"></div>
<svg style="left:124px;top:675px" width="14" height="10" viewBox="0 0 14 10"><rect x="0" y="0" width="2.2" height="10" fill="#000"/><path d="M13 0 L3 5 L13 10 Z" fill="#000"/></svg>
<svg style="left:368px;top:675px" width="10" height="10" viewBox="0 0 10 10"><path d="M9.5 0 L0 5 L9.5 10 Z" fill="#000"/></svg>
<svg style="left:610px;top:675px" width="10" height="10" viewBox="0 0 10 10"><path d="M0.5 0 L10 5 L0.5 10 Z" fill="#000"/></svg>
<svg style="left:851px;top:675px" width="14" height="10" viewBox="0 0 14 10"><path d="M0 0 L10 5 L0 10 Z" fill="#000"/><rect x="11.3" y="0" width="2.2" height="10" fill="#000"/></svg>
<svg style="left:984px;top:42px" width="23" height="23" viewBox="0 0 23 23"><rect x="5.3" y="5" width="12.4" height="12.4" rx="2" fill="#00ffff" stroke="#101010" stroke-width="1.3"/><rect x="6" y="5.6" width="11" height="3.2" fill="#0000ff"/><path d="M0.7 0.8 L4.7 0.8 L0.7 4.8 Z M22 0.8 L18 0.8 L22 4.8 Z M0.7 21.7 L4.7 21.7 L0.7 17.7 Z M22 21.7 L18 21.7 L22 17.7 Z" fill="#000"/><path d="M1 1 L4.5 4.5 M21.7 1 L18.2 4.5 M1 21.5 L4.5 18 M21.7 21.5 L18.2 18" stroke="#000" stroke-width="1.4"/></svg>
<svg style="left:984px;top:71px" width="22" height="23" viewBox="0 0 22 23"><path d="M15.2 3.9 A8.4 8.4 0 1 0 19 14.5" fill="none" stroke="#ff0000" stroke-width="2.9"/><path d="M13.8 2.8 L20.8 2.4 L20.2 9.2 Z" fill="#ff0000"/><path d="M9.6 5 L11.8 5 L11.2 12.5 L10.2 12.5 Z" fill="#000" stroke="#000" stroke-width="1.2" stroke-linejoin="round"/><circle cx="10.7" cy="16.3" r="1.7" fill="#000"/></svg>
<div style="left:976px;top:101px;width:39px;height:40px;border:6px solid #ed1c24;"></div>
<svg style="left:985px;top:112px" width="22" height="22" viewBox="0 0 22 22"><path d="M6.8 11 L6.8 0.9 L14.5 0.9 L18 4.4 L18 11" fill="#fff" stroke="#000" stroke-width="1.6"/><path d="M14.2 0.9 L14.2 4.6 L18 4.6" fill="#c8c8c8" stroke="#000" stroke-width="1.2"/><path d="M9 3.8 L11.5 3.8 M9 6.6 L12.5 6.6 M9 9.3 L16 9.3" stroke="#000" stroke-width="1.5"/><path d="M1.8 11 L18.8 11 Q20.3 11 20.3 12.5 L20.3 19.3 Q20.3 20.8 18.8 20.8 L1.8 20.8 Q0.5 20.8 0.5 19.3 L0.5 12.5 Q0.5 11 1.8 11 Z" fill="#fff" stroke="#000" stroke-width="1.6"/><path d="M2.2 14 L17 14" stroke="#8a8a8a" stroke-width="2.6" stroke-dasharray="1.2 0.8"/><rect x="17" y="12.6" width="2" height="2.8" fill="#ff2020"/><rect x="1.5" y="16.8" width="17.8" height="2.8" fill="#8e8e8e"/><path d="M19.3 2 L20.6 0.6 L20.6 5.6" fill="none" stroke="#0000ff" stroke-width="1.4"/></svg>
<div style="left:985px;top:143px;width:21px;height:21px;background:#a6a6a6;border-radius:2px;"></div>
<svg style="left:984px;top:171px" width="23" height="23" viewBox="0 0 23 23"><path d="M9 1.5 L18 1.5 L21.5 5 L21.5 21.5 L9 21.5 Z" fill="#fff" stroke="#000" stroke-width="1.3"/><path d="M18 1.5 L18 5 L21.5 5" fill="none" stroke="#000" stroke-width="1"/><path d="M12 5 L15 5 M15 9 L19 9 M16 13 L19 13 M14 17 L19 17" stroke="#000" stroke-width="1.1"/><path d="M4.5 2.5 L17 15.5" stroke="#000" stroke-width="3.2"/><path d="M4.5 2.5 L17 15.5" stroke="#e0d000" stroke-width="1.6"/><rect x="3" y="1" width="3" height="3" fill="#ff0000"/><path d="M3.5 9 L9.5 8.5 L12.5 10.5 L12 13 L9 14 L11.5 16.5 L8 19 L3.5 19 Z" fill="#ffff40" stroke="#000" stroke-width="0.8"/><rect x="0.8" y="9" width="2.8" height="10" fill="#20d8f0"/></svg>
<div style="left:988px;top:210px;width:16px;height:6px;background:#ff0000;box-shadow:1px 1px 0 #5a5a5a;"></div>
<div style="left:983px;top:302px;width:25px;height:1px;background:#a0a0a0;"></div>
<div style="left:983px;top:232px;width:25px;height:1px;background:#a0a0a0;"></div>
<div style="left:983px;top:233px;width:25px;height:1px;background:#fff;"></div>
<svg style="left:985px;top:242px" width="22" height="22" viewBox="0 0 22 22"><path d="M1.8 11 L1.8 4 L6.8 4 L6.8 11" fill="#e8e8e8" stroke="#000" stroke-width="1.6"/><path d="M6.8 11 L6.8 0.9 L14.5 0.9 L18 4.4 L18 11" fill="#fff" stroke="#000" stroke-width="1.6"/><path d="M14.2 0.9 L14.2 4.6 L18 4.6" fill="#c8c8c8" stroke="#000" stroke-width="1.2"/><path d="M9 3.8 L11.5 3.8 M9 6.6 L12.5 6.6 M9 9.3 L16 9.3" stroke="#000" stroke-width="1.5"/><path d="M1.8 11 L18.8 11 Q20.3 11 20.3 12.5 L20.3 19.3 Q20.3 20.8 18.8 20.8 L1.8 20.8 Q0.5 20.8 0.5 19.3 L0.5 12.5 Q0.5 11 1.8 11 Z" fill="#fff" stroke="#000" stroke-width="1.6"/><path d="M2.2 14 L17 14" stroke="#8a8a8a" stroke-width="2.6" stroke-dasharray="1.2 0.8"/><rect x="17" y="12.6" width="2" height="2.8" fill="#ff2020"/><rect x="1.5" y="16.8" width="17.8" height="2.8" fill="#8e8e8e"/></svg>
<div style="left:986px;top:277px;width:16px;height:5px;background:#ff0000;"></div>
<div style="left:988px;top:282px;width:17px;height:6px;background:#ff0000;box-shadow:1px 1px 0 #5a5a5a;"></div>
<div style="left:986px;top:282px;width:16px;height:1px;background:#ffc8c8;"></div>
<div style="left:983px;top:302px;width:25px;height:1px;background:#a0a0a0;"></div>
<div style="left:983px;top:303px;width:25px;height:1px;background:#fff;"></div>
<svg style="left:987px;top:316px" width="18" height="15" viewBox="0 0 18 15"><defs><clipPath id="cx"><rect x="0" y="0.2" width="18" height="14.6"/></clipPath></defs><g clip-path="url(#cx)"><path d="M0.5 -0.5 L17.5 15.5 M17.5 -0.5 L0.5 15.5" stroke="#a0a0a0" stroke-width="3.4"/><rect x="7.8" y="0" width="2.6" height="15" fill="#a0a0a0"/></g><rect x="8.4" y="9.6" width="1.4" height="1.4" fill="#e8e8e8"/></svg>
</body></html>
